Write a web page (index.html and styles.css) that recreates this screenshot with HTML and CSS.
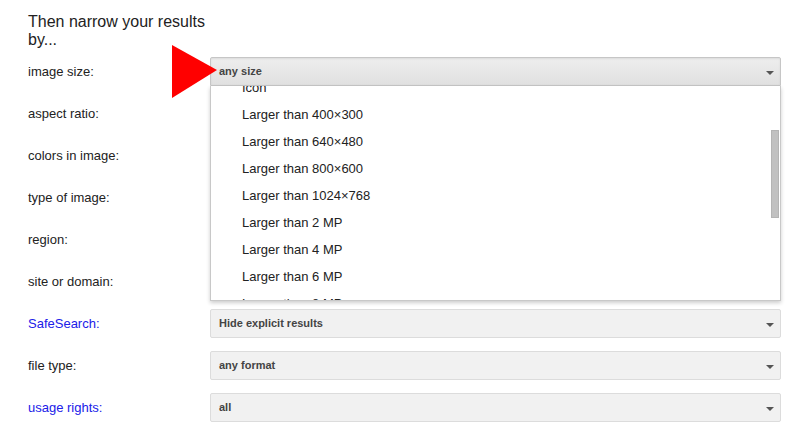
FILE: index.html
```html
<!DOCTYPE html>
<html>
<head>
<meta charset="utf-8">
<link rel="stylesheet" href="styles.css">
</head>
<body>
<div class="page">
  <h2 class="title">Then narrow your results by...</h2>
  <div class="form">
    <div class="row">
      <div class="label">image size:</div>
      <div class="field">
        <div class="select open"><span>any size</span><i class="arrow"></i></div>
        <div class="menu">
          <ul class="list">
            <li>Icon</li>
            <li>Larger than 400×300</li>
            <li>Larger than 640×480</li>
            <li>Larger than 800×600</li>
            <li>Larger than 1024×768</li>
            <li>Larger than 2 MP</li>
            <li>Larger than 4 MP</li>
            <li>Larger than 6 MP</li>
            <li>Larger than 8 MP</li>
          </ul>
          <div class="thumb"></div>
        </div>
        <svg class="pointer" width="46" height="54" viewBox="0 0 46 54"><polygon points="0,0 0,53 45,25" fill="#ff0000"/></svg>
      </div>
    </div>
    <div class="row"><div class="label">aspect ratio:</div><div class="field"></div></div>
    <div class="row"><div class="label">colors in image:</div><div class="field"></div></div>
    <div class="row"><div class="label">type of image:</div><div class="field"></div></div>
    <div class="row"><div class="label">region:</div><div class="field"></div></div>
    <div class="row"><div class="label">site or domain:</div><div class="field"></div></div>
    <div class="row"><div class="label link">SafeSearch:</div><div class="field"><div class="select"><span>Hide explicit results</span><i class="arrow"></i></div></div></div>
    <div class="row"><div class="label">file type:</div><div class="field"><div class="select"><span>any format</span><i class="arrow"></i></div></div></div>
    <div class="row"><div class="label link">usage rights:</div><div class="field"><div class="select"><span>all</span><i class="arrow"></i></div></div></div>
  </div>
</div>
</body>
</html>
```

FILE: styles.css
```css
html, body {
  margin: 0;
  padding: 0;
  background: #fff;
}
body {
  font-family: "Liberation Sans", Arial, sans-serif;
  color: #222;
  overflow: hidden;
}
.page {
  padding: 13px 0 0 28px;
  width: 753px;
}
.title {
  margin: 0;
  width: 200px;
  font-size: 16px;
  font-weight: normal;
  line-height: 18px;
  color: #222;
}
.form {
  margin-top: 1px;
  display: flex;
  flex-direction: column;
}
.row {
  display: grid;
  grid-template-columns: 182px 571px;
  height: 42px;
  align-items: center;
}
.label {
  font-size: 13px;
  color: #222;
}
.label.link {
  color: #2020e8;
}
.field {
  position: relative;
  height: 29px;
}
.select {
  box-sizing: border-box;
  height: 29px;
  border: 1px solid #dcdcdc;
  border-radius: 2px;
  background: #f1f1f1;
  display: flex;
  align-items: center;
  padding: 0 8px;
  font-size: 11px;
  font-weight: bold;
  color: #444;
  position: relative;
}
.select.open {
  background: linear-gradient(#eeeeee, #e0e0e0);
  border-color: #c6c6c6;
  box-shadow: inset 0 1px 2px rgba(0,0,0,0.08);
  border-radius: 2px 2px 0 0;
}
.arrow {
  position: absolute;
  right: 6px;
  top: 13px;
  width: 0;
  height: 0;
  border-left: 4px solid transparent;
  border-right: 4px solid transparent;
  border-top: 4px solid #555;
}
.menu {
  position: absolute;
  left: 0;
  top: 29px;
  width: 571px;
  height: 215px;
  box-sizing: border-box;
  background: #fff;
  border: 1px solid #c8c8c8;
  border-top: none;
  box-shadow: 0 2px 4px rgba(0,0,0,0.2);
  overflow: hidden;
  z-index: 5;
}
.list {
  list-style: none;
  margin: -12px 0 0 0;
  padding: 0;
}
.list li {
  height: 27px;
  line-height: 27px;
  padding-left: 31px;
  font-size: 13px;
  color: #222;
}
.thumb {
  position: absolute;
  right: 1px;
  top: 44px;
  width: 8px;
  height: 88px;
  background: #c1c1c1;
  border: 1px solid #b4b4b4;
  box-sizing: border-box;
}
.pointer {
  position: absolute;
  left: -38px;
  top: -12px;
  z-index: 6;
}
```
